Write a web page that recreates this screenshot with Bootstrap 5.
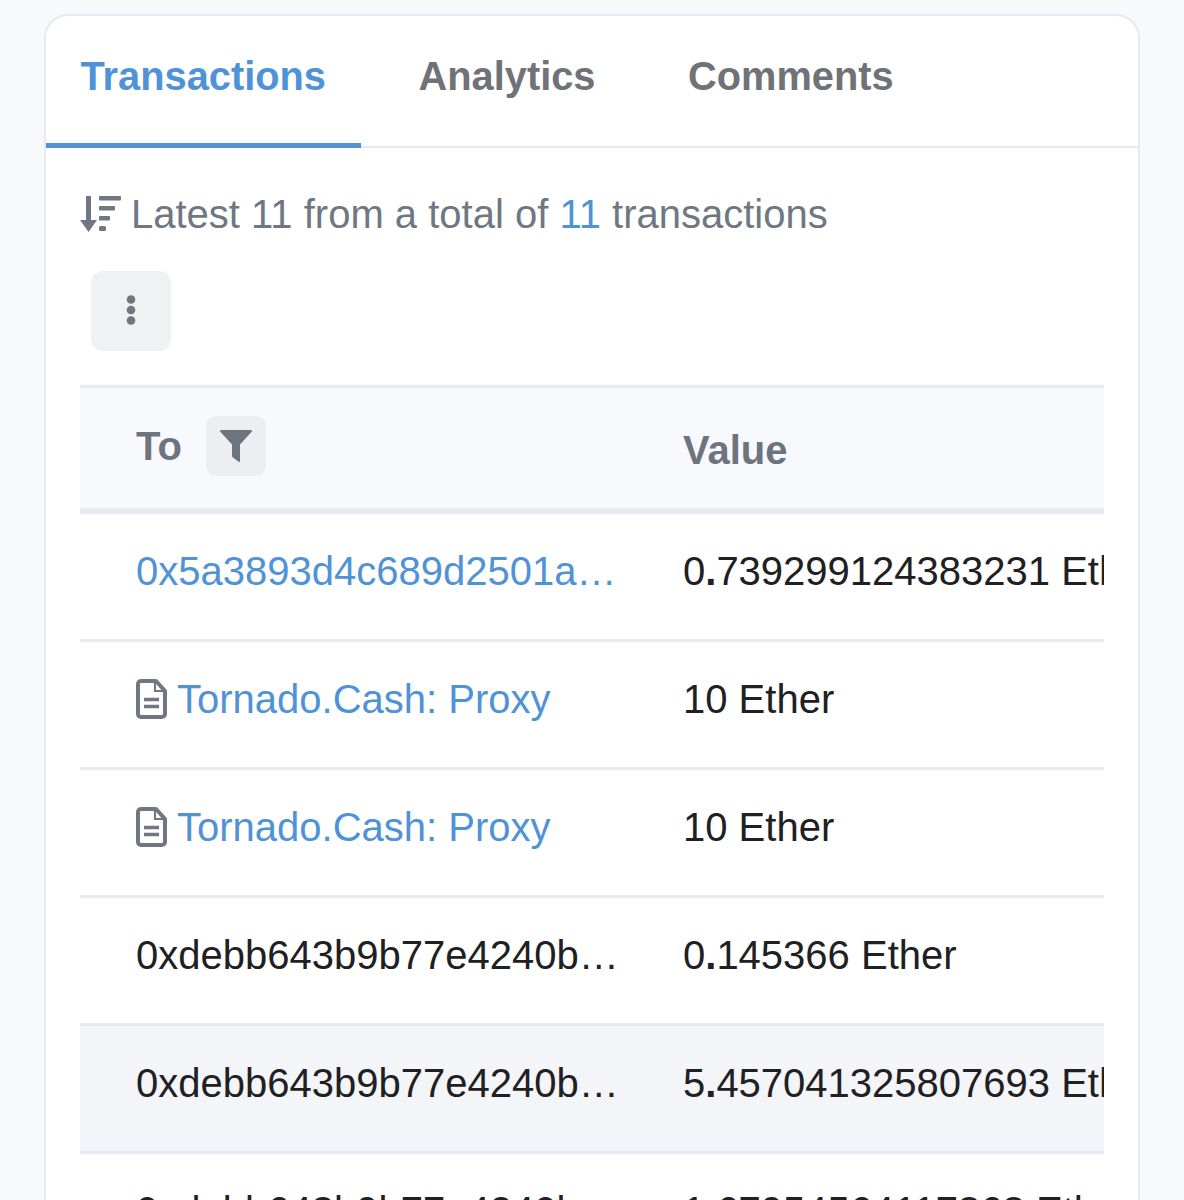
<!DOCTYPE html>
<html lang="en">
<head>
<meta charset="utf-8">
<title>Transactions</title>
<link href="https://cdn.jsdelivr.net/npm/bootstrap@5.3.0/dist/css/bootstrap.min.css" rel="stylesheet">
<style>
html,body{height:1200px;overflow:hidden;}
body{background:#f8f9fb;font-family:"Liberation Sans",Arial,sans-serif;color:#1e2022;}
.stage{height:1200px;overflow:hidden;padding:14px 44px 0;}
.panel{background:#fff;border:2px solid #e7eaf3;border-bottom:0;border-radius:24px 24px 0 0;height:1400px;}
.tabbar{border-bottom:2px solid #e7eaf3;height:132px;gap:23.5px;}
.tabbar .nav-link{font-size:39.8px;font-weight:700;color:#6f7277;padding:0 34.5px;height:132px;line-height:120px;border-bottom:5px solid transparent;}
.tabbar .nav-link.active{color:#4f93d6;border-bottom-color:#4f93d6;}
.content{padding:0 34px;}
.summary{font-size:40px;line-height:48px;color:#6f7782;margin-top:42px;gap:10px;}
.summary a{color:#4f93d6;text-decoration:none;}
.kebab{width:80px;height:80px;background:#f0f1f3;border:0;border-radius:12px;margin:33px 0 34px 11px;padding:0 0 3px;}
.scroller{overflow:hidden;width:1024px;}
.txtable{width:1500px;table-layout:fixed;margin:0;font-size:40px;--bs-table-bg:transparent;border-collapse:separate;border-spacing:0;}
.txtable th,.txtable td{padding:0 0 0 56px;vertical-align:middle;}
.txtable thead th{height:129px;padding-top:4px;background:#f8f9fc;border-top:3px solid #e7eaf3;border-bottom:6px solid #e7eaf3;color:#6c747e;font-weight:700;}
.txtable tbody td{height:128px;padding-bottom:11px;border-bottom:3px solid #e7eaf3;color:#1e2022;white-space:nowrap;}
.txtable a{color:#4f93d6;text-decoration:none;}
.txtable .shaded td{background:#f4f5f9;}
.colto{width:547px;}
.cut{display:block;width:484px;overflow:hidden;text-overflow:ellipsis;white-space:nowrap;}
.headto{gap:24px;margin-top:-8px;}
.filterbtn{width:60px;height:60px;background:#eceef1;border:0;border-radius:10px;padding:0;}
.linkline{gap:10px;}
</style>
</head>
<body>
<div class="stage">
<div class="panel">
  <ul class="nav tabbar">
    <li class="nav-item"><a class="nav-link active" href="#">Transactions</a></li>
    <li class="nav-item"><a class="nav-link" href="#">Analytics</a></li>
    <li class="nav-item"><a class="nav-link" href="#">Comments</a></li>
  </ul>
  <div class="content">
    <div class="summary d-flex align-items-center">
      <svg width="41" height="36" viewBox="0 0 41 36" fill="#6f7782" aria-hidden="true">
        <path d="M6 0h5v24h6L8.500 36 0 24h6z"/>
        <rect x="19" y="0" width="22" height="4.500" rx="1"/>
        <rect x="19" y="10" width="16" height="4.500" rx="1"/>
        <rect x="19" y="20" width="11" height="4.500" rx="1"/>
        <rect x="19" y="30" width="7" height="5" rx="1.500"/>
      </svg>
      <span>Latest 11 from a total of <a href="#">11</a> transactions</span>
    </div>
    <button class="kebab d-flex align-items-center justify-content-center" type="button" aria-label="More">
      <svg width="10" height="30" viewBox="0 0 10 30" fill="#6f7782" aria-hidden="true"><circle cx="5" cy="4.500" r="4.300"/><circle cx="5" cy="15" r="4.300"/><circle cx="5" cy="25.500" r="4.300"/></svg>
    </button>
    <div class="scroller">
      <table class="table txtable">
        <colgroup><col class="colto"><col></colgroup>
        <thead>
          <tr>
            <th><div class="headto d-flex align-items-center">To
              <button class="filterbtn d-flex align-items-center justify-content-center" type="button" aria-label="Filter">
                <svg width="32" height="32" viewBox="0 0 32 32" fill="#6c747e" aria-hidden="true"><path d="M1 0h30c1 0 1.300 1 .7 1.700L20 14.500V31c0 1-.7 1.200-1.400.8L13 27.500c-.7-.5-1-1-1-1.800V14.500L.3 1.700C-.3 1 0 0 1 0z"/></svg>
              </button></div></th>
            <th>Value</th>
          </tr>
        </thead>
        <tbody>
          <tr><td><a class="cut" href="#">0x5a3893d4c689d2501a3f7c1e8b</a></td><td>0<b>.</b>739299124383231 Ether</td></tr>
          <tr><td><div class="linkline d-flex align-items-center"><svg width="31" height="40" viewBox="0 0 31 40" fill="none" stroke="#6f7782" stroke-width="4" aria-hidden="true"><path d="M5 2h15l9 10v23a3 3 0 0 1-3 3H5a3 3 0 0 1-3-3V5a3 3 0 0 1 3-3z" stroke-linejoin="round"/><path d="M19 3v9h9" stroke-width="2"/><path d="M8 20.500h15M8 27.500h15" stroke-width="3.500"/></svg><a href="#">Tornado.Cash: Proxy</a></div></td><td>10 Ether</td></tr>
          <tr><td><div class="linkline d-flex align-items-center"><svg width="31" height="40" viewBox="0 0 31 40" fill="none" stroke="#6f7782" stroke-width="4" aria-hidden="true"><path d="M5 2h15l9 10v23a3 3 0 0 1-3 3H5a3 3 0 0 1-3-3V5a3 3 0 0 1 3-3z" stroke-linejoin="round"/><path d="M19 3v9h9" stroke-width="2"/><path d="M8 20.500h15M8 27.500h15" stroke-width="3.500"/></svg><a href="#">Tornado.Cash: Proxy</a></div></td><td>10 Ether</td></tr>
          <tr><td><span class="cut">0xdebb643b9b77e4240b9a1c3d5e</span></td><td>0<b>.</b>145366 Ether</td></tr>
          <tr class="shaded"><td><span class="cut">0xdebb643b9b77e4240b9a1c3d5e</span></td><td>5<b>.</b>457041325807693 Ether</td></tr>
          <tr><td><span class="cut">0xdebb643b9b77e4240b9a1c3d5e</span></td><td>1<b>.</b>67954564117868 Ether</td></tr>
        </tbody>
      </table>
    </div>
  </div>
</div>
</div>
<script src="https://cdn.jsdelivr.net/npm/bootstrap@5.3.0/dist/js/bootstrap.bundle.min.js"></script>
</body>
</html>
